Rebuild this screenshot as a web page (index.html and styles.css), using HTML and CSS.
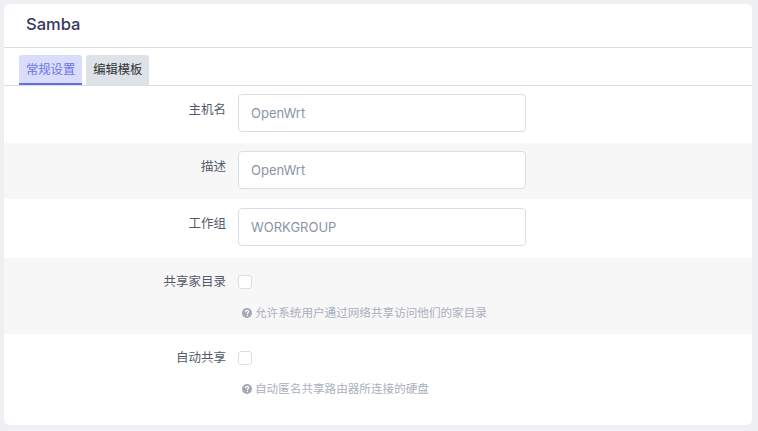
FILE: index.html
```html
<!DOCTYPE html>
<html lang="zh-CN">
<head>
    <meta charset="UTF-8">
    <title>Samba</title>
    <link rel="stylesheet" href="styles.css">
</head>
<body>
    <div class="card">
        <div class="card-header">Samba</div>
        <div class="tabs">
            <div class="tab active">常规设置</div>
            <div class="tab">编辑模板</div>
        </div>

        <div class="row first">
            <label class="label">主机名</label>
            <div class="field"><input class="text-input" type="text" value="OpenWrt"></div>
        </div>
        <div class="row alt">
            <label class="label">描述</label>
            <div class="field"><input class="text-input" type="text" value="OpenWrt"></div>
        </div>
        <div class="row tall">
            <label class="label">工作组</label>
            <div class="field"><input class="text-input" type="text" value="WORKGROUP"></div>
        </div>
        <div class="row check-row alt">
            <label class="label">共享家目录</label>
            <div class="field">
                <span class="checkbox"></span>
                <div class="help">
                    <svg class="help-icon" viewBox="0 0 16 16"><circle cx="8" cy="8" r="8" fill="#a3a8b4"/><path d="M5.6 6.1c0-1.4 1.1-2.3 2.5-2.3s2.4.9 2.4 2.1c0 1.7-2 1.8-2 3.2" stroke="#fff" stroke-width="1.9" fill="none" stroke-linecap="round"/><circle cx="8.5" cy="12" r="1.1" fill="#fff"/></svg>
                    允许系统用户通过网络共享访问他们的家目录
                </div>
            </div>
        </div>
        <div class="row check-row">
            <label class="label">自动共享</label>
            <div class="field">
                <span class="checkbox"></span>
                <div class="help">
                    <svg class="help-icon" viewBox="0 0 16 16"><circle cx="8" cy="8" r="8" fill="#a3a8b4"/><path d="M5.6 6.1c0-1.4 1.1-2.3 2.5-2.3s2.4.9 2.4 2.1c0 1.7-2 1.8-2 3.2" stroke="#fff" stroke-width="1.9" fill="none" stroke-linecap="round"/><circle cx="8.5" cy="12" r="1.1" fill="#fff"/></svg>
                    自动匿名共享路由器所连接的硬盘
                </div>
            </div>
        </div>
    </div>
</body>
</html>
```

FILE: styles.css
```css
body {
    margin: 0;
    padding: 4px 6px 6px 4px;
    background: #eef0f3;
    font-family: Inter, "Noto Sans CJK SC", sans-serif;
}
.card {
    background: white;
    border-radius: 5px;
    padding-bottom: 15px;
    box-shadow: 0 0 1px rgba(0, 0, 0, 0.08);
}
.card-header {
    height: 43px;
    line-height: 40px;
    padding-left: 22px;
    font-size: 16.5px;
    font-weight: 500;
    color: #363a5e;
    border-bottom: 1px solid #dcdde0;
}
.tabs {
    display: flex;
    gap: 4px;
    padding: 7px 0 0 15px;
    border-bottom: 1px solid #dcdde0;
}
.tab {
    height: 30px;
    box-sizing: border-box;
    padding: 0 7px;
    line-height: 29px;
    font-size: 12.3px;
    color: #333;
    background: #dce2e7;
    border-radius: 3px 3px 0 0;
    border-bottom: 2px solid transparent;
}
.tab.active {
    background: #dadcfc;
    color: #6a74e6;
    border-bottom-color: #5e72e4;
}
.row {
    display: grid;
    grid-template-columns: 222px 288px;
    column-gap: 12px;
    padding: 8px 0 10px;
}
.row.first {
    padding: 8px 0 11px;
}
.row.alt {
    background: #f7f7f8;
}
.row.tall {
    padding: 9px 0 12px;
}
.row.check-row {
    padding: 9px 0 12px;
}
.label {
    text-align: right;
    font-size: 12.5px;
    line-height: 20px;
    padding-top: 6px;
    color: #525a6a;
}
.check-row .label {
    padding-top: 5px;
}
.text-input {
    width: 100%;
    height: 38px;
    box-sizing: border-box;
    border: 1px solid #dadde3;
    border-radius: 4px;
    padding: 0 12px;
    font-family: inherit;
    font-size: 13px;
    color: #8a94a6;
    background: white;
    outline: none;
}
.checkbox {
    display: block;
    width: 14px;
    height: 14px;
    margin-top: 8px;
    border: 1px solid #dadde3;
    border-radius: 3px;
    background: white;
    box-sizing: border-box;
}
.help {
    margin-top: 15px;
    padding-left: 4px;
    line-height: 18px;
    font-size: 11.6px;
    color: #aab0bb;
    white-space: nowrap;
    display: flex;
    align-items: center;
    gap: 3px;
}
.help-icon {
    width: 10px;
    height: 10px;
}
```
